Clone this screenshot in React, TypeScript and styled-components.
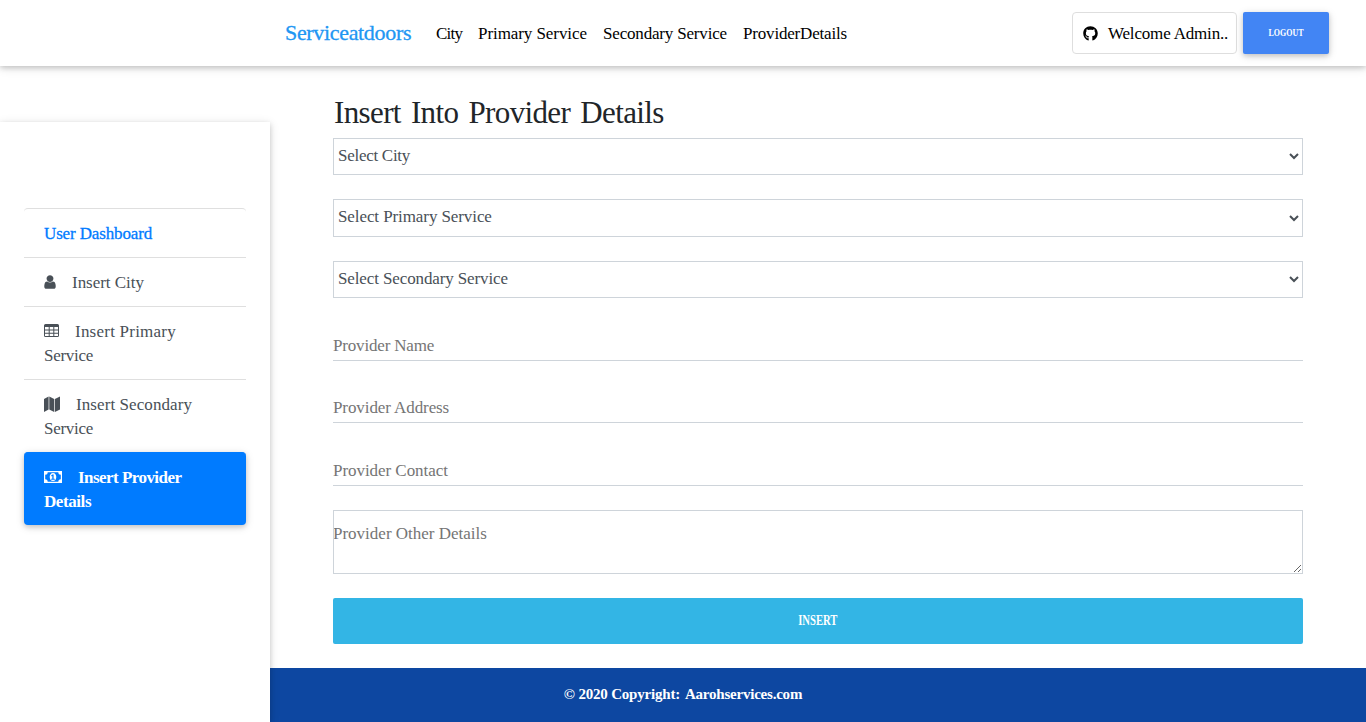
import React from 'react';
import styled, { createGlobalStyle, css } from 'styled-components';
import { FaGithub } from 'react-icons/fa';

const GlobalStyle = createGlobalStyle`
  *, *::before, *::after { box-sizing: border-box; }
  html, body { margin: 0; height: 100%; overflow: hidden; }
  body {
    background: #fff;
    color: #212529;
    font-family: "Liberation Serif", "Times New Roman", serif;
    font-size: 17px;
    line-height: 24px;
  }
`;

const Page = styled.div`
  display: flex;
  flex-direction: column;
  height: 722px;
`;

const Header = styled.header`
  position: relative;
  z-index: 2;
  flex: none;
  display: flex;
  align-items: center;
  height: 66px;
  padding: 0 37px 0 285px;
  background: #fff;
  box-shadow: 0 2px 5px rgba(0, 0, 0, 0.16), 0 2px 10px rgba(0, 0, 0, 0.12);
`;

const Spaced = styled.span<{ $spacing?: number }>`
  letter-spacing: ${({ $spacing = 0 }) => $spacing}px;
  white-space: nowrap;
`;

const Brand = styled.a`
  width: 151px;
  color: #2196f3;
  font-size: 22px;
  -webkit-text-stroke: 0.3px #2196f3;
`;

const Nav = styled.nav`
  flex: 1;
  display: flex;
  gap: 16px;
  padding-top: 1px;
`;

const NavLink = styled.a<{ $width: number }>`
  width: ${({ $width }) => $width}px;
  color: #000;
`;

const Welcome = styled.div`
  display: flex;
  align-items: center;
  gap: 10px;
  width: 165px;
  height: 42px;
  margin-right: 6px;
  padding: 1px 0 0 10px;
  border: 1px solid #dedede;
  border-radius: 4px;
  color: #000;
`;

const Condensed = styled.span`
  display: inline-block;
  transform: scaleX(0.76);
`;

const LogoutButton = styled.button`
  width: 86px;
  height: 42px;
  padding: 0 0 1px;
  border: 0;
  border-radius: 2px;
  background: #4285f4;
  color: #fff;
  font: 700 10.5px "Liberation Serif", serif;
  box-shadow: 0 2px 5px rgba(0, 0, 0, 0.16), 0 2px 10px rgba(0, 0, 0, 0.12);
`;

const Body = styled.div`
  flex: 1;
  display: grid;
  grid-template-columns: 270px 1fr;
  min-height: 0;
`;

const Sidebar = styled.aside`
  position: relative;
  z-index: 1;
  margin-top: 56px;
  padding: 86px 24px 0;
  background: #fff;
  box-shadow: 0 2px 5px rgba(0, 0, 0, 0.16), 0 2px 10px rgba(0, 0, 0, 0.12);
`;

const MenuItem = styled.a<{ $variant?: 'title' | 'active' }>`
  display: block;
  padding: 13px 20px 11px;
  border-top: 1px solid #dfdfdf;
  color: #495057;
  ${({ $variant }) =>
    $variant === 'title' &&
    css`
      border-radius: 4px 4px 0 0;
      color: #007bff;
      -webkit-text-stroke: 0.3px #007bff;
    `}
  ${({ $variant }) =>
    $variant === 'active' &&
    css`
      border-color: #007bff;
      border-radius: 4px;
      background: #007bff;
      color: #fff;
      font-weight: 700;
      box-shadow: 0 2px 5px rgba(0, 0, 0, 0.16), 0 2px 10px rgba(0, 0, 0, 0.12);
    `}
`;

const MenuIcon = styled.svg`
  height: 16px;
  margin-right: 16px;
  vertical-align: -2px;
  fill: currentColor;
`;

const Content = styled.div`
  display: flex;
  flex-direction: column;
  min-width: 0;
`;

const Form = styled.form`
  display: flex;
  flex-direction: column;
  gap: 24px;
  padding: 28px 63px 24px;
`;

const Title = styled.h2`
  height: 43.9px;
  margin: 0 0 -24px;
  padding-left: 1px;
  font-size: 31px;
  font-weight: 400;
  line-height: 37px;
  word-spacing: 3px;
`;

const fieldText = css`
  font-family: "Liberation Serif", serif;
  font-size: 17px;
  line-height: 24px;
`;

const Select = styled.select<{ $spacing: number }>`
  ${fieldText}
  height: 37.5px;
  padding: 0 1px 3px 0;
  border: 1px solid #ced4da;
  border-radius: 0;
  background: #fff;
  color: #495057;
  letter-spacing: ${({ $spacing }) => $spacing}px;
`;

const Input = styled.input<{ $spacing: number }>`
  ${fieldText}
  height: 38.55px;
  padding: 9px 0 0;
  border: 0;
  border-bottom: 1px solid #ced4da;
  border-radius: 0;
  background: transparent;
  letter-spacing: ${({ $spacing }) => $spacing}px;
  &::placeholder { color: #757575; opacity: 1; }
`;

const TextArea = styled.textarea`
  ${fieldText}
  height: 64px;
  padding: 11px 0 0;
  border: 1px solid #ced4da;
  letter-spacing: 0;
  text-indent: -1px;
  overflow: hidden;
  resize: vertical;
  &::placeholder { color: #757575; opacity: 1; }
`;

const InsertButton = styled.button`
  height: 46px;
  padding: 0;
  border: 0;
  border-radius: 2px;
  background: #33b5e5;
  color: #fff;
  font: 700 14px "Liberation Serif", serif;
`;

const Footer = styled.footer`
  flex: 1;
  display: flex;
  justify-content: center;
  gap: 5px;
  padding: 14px 270px 0 0;
  background: #0d47a1;
  color: #fff;
  font-size: 15px;
  font-weight: 700;
`;

const UserIcon = () => (
  <MenuIcon viewBox="0 0 1280 1792" width="12">
    <path d="M1280 1399q0 109-62.5 187t-150.5 78h-854q-88 0-150.5-78t-62.5-187q0-85 8.5-160.5t31.5-152 58.5-131 94-89 134.5-34.5q131 128 313 128t313-128q76 0 134.5 34.5t94 89 58.5 131 31.5 152 8.5 160.5zM1024 512q0 159-112.5 271.5t-271.5 112.5-271.5-112.5-112.5-271.5 112.5-271.5 271.5-112.5 271.5 112.5 112.5 271.5z" />
  </MenuIcon>
);

const TableIcon = () => (
  <MenuIcon viewBox="0 0 15 16" width="15">
    <path
      fillRule="evenodd"
      d="M1.500 1h12A1.500 1.500 0 0 1 15 2.500v10A1.500 1.500 0 0 1 13.500 14h-12A1.500 1.500 0 0 1 0 12.500v-10A1.500 1.500 0 0 1 1.500 1zM1 4v2.400h3.700V4zM5.700 4v2.400h3.600V4zM10.300 4v2.400H14V4zM1 7.400v2.300h3.700V7.400zM5.700 7.400v2.300h3.600V7.400zM10.300 7.400v2.300H14V7.400zM1 10.700V13h3.700v-2.300zM5.700 10.700V13h3.600v-2.300zM10.300 10.700V13H14v-2.300z"
    />
  </MenuIcon>
);

const MapIcon = () => (
  <MenuIcon viewBox="0 0 16 16" width="16">
    <path d="M0 3.100L4.600.5v12.900L0 16zM5.300.5l4.900 2.600V16l-4.900-2.600zM10.900 3.100L16 .5v12.900L10.900 16z" />
  </MenuIcon>
);

const MoneyIcon = () => (
  <MenuIcon viewBox="0 0 18 16" width="18">
    <path
      fillRule="evenodd"
      d="M0 2h18v12H0zM3.700 3.300A2.500 2.500 0 0 1 1.200 5.800v4.400a2.500 2.500 0 0 1 2.500 2.500h10.600a2.500 2.500 0 0 1 2.500-2.500V5.800a2.500 2.500 0 0 1-2.500-2.500z"
    />
    <path
      fillRule="evenodd"
      d="M9 3.900c2.100 0 3.300 1.800 3.300 4.100S11.100 12.100 9 12.100 5.700 10.300 5.700 8 6.900 3.900 9 3.900zM8.500 5.400L7.100 6.600l.6.8.6-.5v2.800H7.200v1h3.600v-1H9.600V5.400z"
    />
  </MenuIcon>
);

export default function App() {
  return (
    <Page>
      <GlobalStyle />
      <Header>
        <Brand><Spaced $spacing={-0.33}>Serviceatdoors</Spaced></Brand>
        <Nav>
          <NavLink $width={26}><Spaced $spacing={-0.8}>City</Spaced></NavLink>
          <NavLink $width={109}><Spaced $spacing={-0.07}>Primary Service</Spaced></NavLink>
          <NavLink $width={124}><Spaced $spacing={-0.18}>Secondary Service</Spaced></NavLink>
          <NavLink $width={104}><Spaced $spacing={-0.18}>ProviderDetails</Spaced></NavLink>
        </Nav>
        <Welcome>
          <FaGithub size={15} />
          <Spaced $spacing={-0.18}>Welcome Admin..</Spaced>
        </Welcome>
        <LogoutButton><Condensed>LOGOUT</Condensed></LogoutButton>
      </Header>
      <Body>
        <Sidebar>
          <MenuItem $variant="title"><Spaced $spacing={-0.14}>User Dashboard</Spaced></MenuItem>
          <MenuItem><UserIcon /><Spaced $spacing={-0.03}>Insert City</Spaced></MenuItem>
          <MenuItem>
            <TableIcon /><Spaced $spacing={0.23}>Insert Primary</Spaced><br />
            <Spaced $spacing={-0.28}>Service</Spaced>
          </MenuItem>
          <MenuItem>
            <MapIcon /><Spaced $spacing={0.08}>Insert Secondary</Spaced><br />
            <Spaced $spacing={-0.28}>Service</Spaced>
          </MenuItem>
          <MenuItem $variant="active">
            <MoneyIcon /><Spaced $spacing={-0.54}>Insert Provider</Spaced><br />
            <Spaced $spacing={-0.42}>Details</Spaced>
          </MenuItem>
        </Sidebar>
        <Content>
          <Form>
            <Title><Spaced $spacing={-0.63}>Insert Into Provider Details</Spaced></Title>
            <Select $spacing={-0.28}><option>Select City</option></Select>
            <Select $spacing={-0.09}><option>Select Primary Service</option></Select>
            <Select $spacing={-0.12}><option>Select Secondary Service</option></Select>
            <Input $spacing={-0.17} placeholder="Provider Name" />
            <Input $spacing={-0.09} placeholder="Provider Address" />
            <Input $spacing={-0.05} placeholder="Provider Contact" />
            <TextArea placeholder="Provider Other Details" />
            <InsertButton type="button"><Condensed>INSERT</Condensed></InsertButton>
          </Form>
          <Footer>
            <Spaced $spacing={-0.2}>© 2020 Copyright:</Spaced>
            <Spaced $spacing={-0.22}>Aarohservices.com</Spaced>
          </Footer>
        </Content>
      </Body>
    </Page>
  );
}
